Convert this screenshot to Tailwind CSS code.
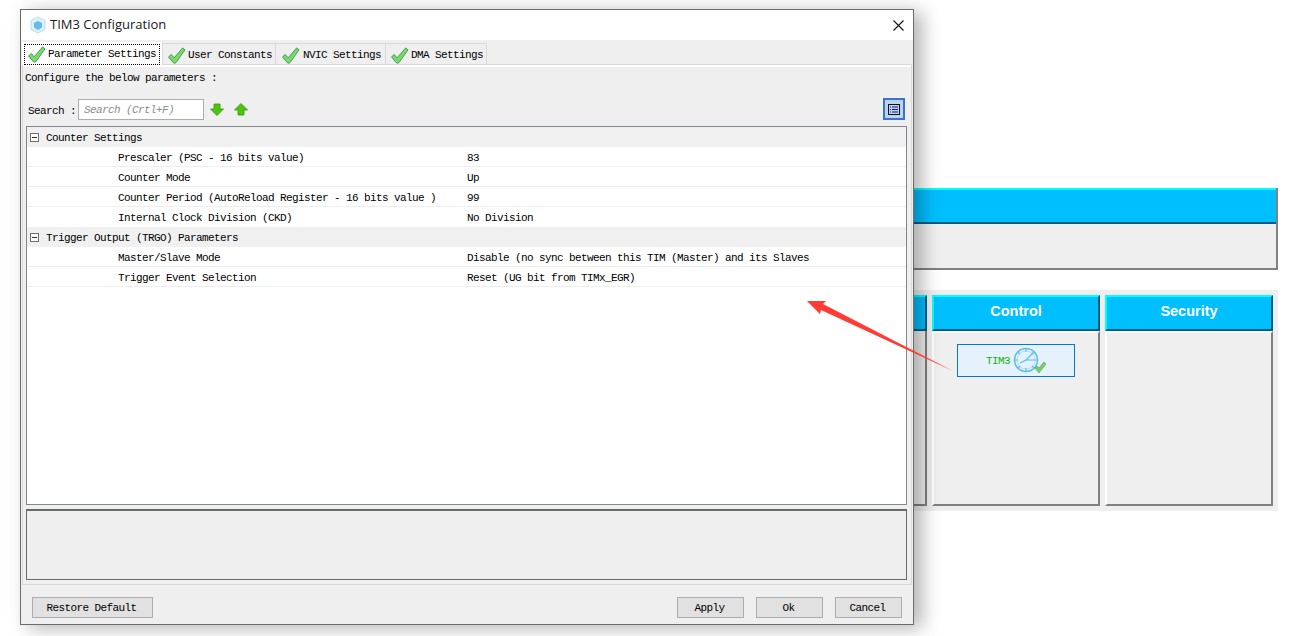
<!DOCTYPE html>
<html lang="en">
<head>
  <meta charset="UTF-8" />
  <title>TIM3 Configuration</title>
  <script src="https://cdn.jsdelivr.net/npm/@tailwindcss/browser@4"></script>
</head>
<body class="bg-white">
<div class="relative w-[1293px] h-[636px] overflow-hidden bg-white">

  <!-- pinout view behind the dialog -->
  <div class="ml-[880px] pt-[188px] w-[398px]">
    <div class="h-[82px] flex flex-col bg-[#efefef] border-r-2 border-b-2 border-[#808080]">
      <div class="h-[36px] bg-[#00bfff] border-t-2 border-t-[#00ffff] border-b-2 border-b-[#005f7f]"></div>
    </div>
    <div class="mt-[20px] h-[221px] bg-[#efefef] flex gap-[5px] py-[5px] pr-[5px] font-['Liberation_Sans',sans-serif]">
      <div class="w-[47px] flex flex-col">
        <div class="h-[36px] bg-[#00bfff] border-t-2 border-t-[#00ffff] border-b-2 border-b-[#005f7f] border-r-2 border-r-[#005f7f]"></div>
        <div class="flex-1 border-r-2 border-b-2 border-[#808080]"></div>
      </div>
      <div class="w-[168px] flex flex-col">
        <div class="h-[36px] pb-[3px] flex items-center justify-center text-white font-bold text-[14.5px] bg-[#00bfff] border-2 border-t-[#00ffff] border-l-[#00ffff] border-b-[#005f7f] border-r-[#005f7f]">Control</div>
        <div class="flex-1 border-2 border-l-white border-t-white border-r-[#808080] border-b-[#808080] pt-[11px] pl-[23px]">
          <div class="w-[118px] h-[33px] border border-[#0078d7] bg-[#e5f1fb] flex items-center pl-[28px] gap-[2px]">
            <span class="pt-[2px] font-['Liberation_Mono',monospace] text-[11px] tracking-[-0.6px] text-[#0cb50c]">TIM3</span>
            <svg width="38" height="30" viewBox="0 0 38 30" class="shrink-0">
              <circle cx="14" cy="14" r="11.5" fill="#e5f1fb" stroke="#5dbdea" stroke-width="1.5"/>
              <circle cx="14" cy="14" r="9" fill="none" stroke="#a9dcf5" stroke-width="0.8"/>
              <path d="M14 3v3M14 22v3M3 14h3M22 14h3M6 6l2 2M22 6l-2 2M6 22l2-2M22 22l-2-2" stroke="#5dbdea" stroke-width="1.2"/>
              <path d="M8 17l6-3 7-7M14 14l8 0" stroke="#5dbdea" stroke-width="1.1" fill="none"/>
              <path d="M23 22l2-2 2 2 5-6 2 2-7 9z" fill="#79cf6e" stroke="#4aa548" stroke-width="0.6"/>
            </svg>
          </div>
        </div>
      </div>
      <div class="w-[168px] flex flex-col">
        <div class="h-[36px] pb-[3px] flex items-center justify-center text-white font-bold text-[14.5px] bg-[#00bfff] border-2 border-t-[#00ffff] border-l-[#00ffff] border-b-[#005f7f] border-r-[#005f7f]">Security</div>
        <div class="flex-1 border-2 border-l-white border-t-white border-r-[#808080] border-b-[#808080]"></div>
      </div>
    </div>
  </div>

  <!-- dialog window -->
  <div class="absolute left-[20px] top-[9px] w-[894px] h-[616px] flex flex-col bg-[#efefef] border border-[#6b6b6b] shadow-[8px_3px_18px_rgba(0,0,0,0.3)] font-['Liberation_Mono',monospace] text-[11px] tracking-[-0.6px] text-black">
    <svg width="0" height="0" class="absolute">
      <symbol id="chk" viewBox="0 0 20 18">
        <path d="M1.500 10.500L4.500 8l3 3.500L16.500 1l2.500 2L9.500 16.500q-1.500 1.500-3 0z" fill="#7ad771" stroke="#3f9c46" stroke-width="1"/>
      </symbol>
    </svg>

    <!-- title bar -->
    <div class="h-[30px] shrink-0 bg-white flex items-center pl-[8px] pr-[9px]">
      <svg width="18" height="18" viewBox="0 0 18 18">
        <path d="M9 1l7 3.500v9L9 17l-7-3.500v-9z" fill="#dff0fa" stroke="#b9def2" stroke-width="1"/>
        <path d="M9 5l4 2v4.500L9 14l-4-2.500V7z" fill="#62bdea"/>
      </svg>
      <span class="ml-[3px] font-['Open_Sans',sans-serif] text-[13px] tracking-normal text-[#1a1a1a]">TIM3 Configuration</span>
      <svg class="ml-auto" width="11" height="11" viewBox="0 0 11 11"><path d="M0.500 0.500l10 10M10.500 0.500l-10 10" stroke="#111" stroke-width="1.1"/></svg>
    </div>

    <!-- tabs -->
    <div class="h-[24px] shrink-0 pl-[1px] flex items-end relative">
      <div class="w-[140px] h-[23px] bg-white px-[2px] pt-[2px] pb-0 -mb-[1px] relative z-10">
        <div class="h-full border border-dotted border-black flex items-center pl-[2px] gap-[2px]">
          <svg width="19" height="17"><use href="#chk"/></svg><span>Parameter Settings</span>
        </div>
      </div>
      <div class="w-[114px] h-[21px] pt-[3px] border border-b-0 border-[#d9d9d9] flex items-center pl-[4px] gap-[2px]">
        <svg width="19" height="17"><use href="#chk"/></svg><span>User Constants</span>
      </div>
      <div class="w-[110px] h-[21px] pt-[3px] border border-b-0 border-l-0 border-[#d9d9d9] flex items-center pl-[5px] gap-[3px]">
        <svg width="19" height="17"><use href="#chk"/></svg><span>NVIC Settings</span>
      </div>
      <div class="w-[101px] h-[21px] pt-[3px] border border-b-0 border-l-0 border-[#d9d9d9] flex items-center pl-[4px] gap-[2px]">
        <svg width="19" height="17"><use href="#chk"/></svg><span>DMA Settings</span>
      </div>
    </div>

    <!-- tab page -->
    <div class="h-[521px] shrink-0 mx-[1px] border border-[#d9d9d9] flex flex-col">
      <div class="h-[2px] bg-white shrink-0"></div>
      <div class="h-[20px] mt-[1px] pl-[2px] flex items-center shrink-0">Configure the below parameters :</div>

      <div class="h-[22px] mt-[10px] pl-[5px] pr-[6px] flex items-center shrink-0">
        <span class="w-[50px] pt-[4px]">Search :</span>
        <div class="w-[126px] h-[21px] pt-[3px] border border-[#adadad] bg-white flex items-center pl-[5px] italic text-[#8c8c8c]">Search (Crtl+F)</div>
        <svg class="ml-[6px]" width="14" height="13" viewBox="0 0 14 13"><path d="M4 1h6v5h3.500L7 12.500.5 6H4z" fill="#4fc30f" stroke="#2f9a0a" stroke-width="0.8"/></svg>
        <svg class="ml-[10px]" width="14" height="13" viewBox="0 0 14 13"><path d="M4 12h6V7h3.500L7 .5.5 7H4z" fill="#4fc30f" stroke="#2f9a0a" stroke-width="0.8"/></svg>
        <div class="ml-auto w-[22px] h-[22px] border-2 border-[#3a74c8] bg-[#bcd3ef] flex items-center justify-center">
          <svg width="12" height="11" viewBox="0 0 12 11">
            <rect x="0.500" y="0.500" width="11" height="10" fill="none" stroke="#111"/>
            <path d="M2 3h1M4 3h6M2 5.500h1M4 5.500h6M2 8h1M4 8h6" stroke="#16169c" stroke-width="1"/>
          </svg>
        </div>
      </div>

      <!-- parameter table -->
      <div class="h-[379px] mt-[6px] ml-[3px] mr-[4px] border border-[#828790] bg-white shrink-0">
        <div class="h-[20px] pt-[2px] bg-[#f0f0f0] flex items-center">
          <span class="ml-[3px] -mt-[2px] w-[9px] h-[9px] border border-[#6e6e6e] bg-white flex items-center justify-center"><span class="w-[5px] h-px bg-[#333]"></span></span>
          <span class="ml-[7px]">Counter Settings</span>
        </div>
        <div class="h-[20px] pt-[3px] flex items-center border-b border-[#eeeeee]"><span class="ml-[91px] w-[349px]">Prescaler (PSC - 16 bits value)</span><span>83</span></div>
        <div class="h-[20px] pt-[3px] flex items-center border-b border-[#eeeeee]"><span class="ml-[91px] w-[349px]">Counter Mode</span><span>Up</span></div>
        <div class="h-[20px] pt-[3px] flex items-center border-b border-[#eeeeee]"><span class="ml-[91px] w-[349px]">Counter Period (AutoReload Register - 16 bits value )</span><span>99</span></div>
        <div class="h-[20px] pt-[2px] flex items-center"><span class="ml-[91px] w-[349px]">Internal Clock Division (CKD)</span><span>No Division</span></div>
        <div class="h-[20px] pt-[2px] bg-[#f0f0f0] flex items-center">
          <span class="ml-[3px] -mt-[2px] w-[9px] h-[9px] border border-[#6e6e6e] bg-white flex items-center justify-center"><span class="w-[5px] h-px bg-[#333]"></span></span>
          <span class="ml-[7px]">Trigger Output (TRGO) Parameters</span>
        </div>
        <div class="h-[20px] pt-[3px] flex items-center border-b border-[#eeeeee]"><span class="ml-[91px] w-[349px]">Master/Slave Mode</span><span>Disable (no sync between this TIM (Master) and its Slaves</span></div>
        <div class="h-[20px] pt-[3px] flex items-center border-b border-[#eeeeee]"><span class="ml-[91px] w-[349px]">Trigger Event Selection</span><span>Reset (UG bit from TIMx_EGR)</span></div>
      </div>

      <!-- description box -->
      <div class="h-[71px] mt-[4px] ml-[3px] mr-[4px] border border-t-2 border-[#696969] shrink-0"></div>
    </div>

    <!-- buttons -->
    <div class="flex-1 flex items-start pt-[12px] pl-[11px] pr-[11px]">
      <button class="w-[121px] h-[21px] pt-[2px] pr-[2px] bg-[#e1e1e1] border border-[#adadad]">Restore Default</button>
      <button class="ml-auto w-[67px] h-[21px] pt-[2px] pr-[2px] bg-[#e1e1e1] border border-[#adadad]">Apply</button>
      <button class="ml-[12px] w-[67px] h-[21px] pt-[2px] pr-[2px] bg-[#e1e1e1] border border-[#adadad]">Ok</button>
      <button class="ml-[12px] w-[67px] h-[21px] pt-[2px] pr-[2px] bg-[#e1e1e1] border border-[#adadad]">Cancel</button>
    </div>
  </div>

  <!-- red annotation arrow -->
  <svg class="absolute left-[800px] top-[295px]" width="160" height="85" viewBox="800 295 160 85">
    <path d="M953 371L821 310L820 314L807 301L826 301L823 304Z" fill="#ff3b33"/>
  </svg>
</div>
</body>
</html>
